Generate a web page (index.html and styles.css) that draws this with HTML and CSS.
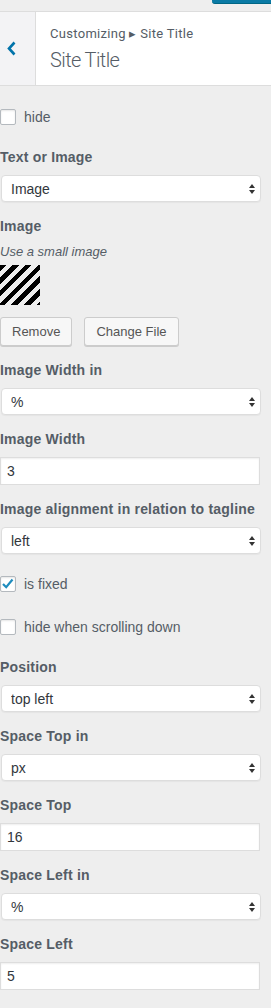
FILE: index.html
```html
<!DOCTYPE html>
<html lang="en">
    <head>
        <meta charset="UTF-8" />
        <meta name="viewport" content="width=device-width, initial-scale=1.0" />
        <title>Site Title</title>
        <link rel="stylesheet" href="styles.css">
    </head>
    <body>
        <!-- top bar with publish button -->
        <div class="top-bar">
            <span class="publish"></span>
        </div>

        <!-- section header -->
        <div class="section-head">
            <button class="back" aria-label="Back">
                <svg width="9" height="15" viewBox="0 0 9 15"><path d="M7.5 1.5 L2 7.5 L7.5 13.5" fill="none" stroke="#0073aa" stroke-width="2.6"/></svg>
            </button>
            <div class="head-title">
                <span class="crumb">Customizing ▸ Site Title</span>
                <h3>Site Title</h3>
            </div>
        </div>

        <div class="controls">
            <label class="control check-row"><input type="checkbox" /> hide</label>

            <div class="control">
                <span class="control-title">Text or Image</span>
                <select><option>Image</option><option>Text</option></select>
            </div>

            <div class="control">
                <span class="control-title">Image</span>
                <span class="description">Use a small image</span>
                <div class="thumb"></div>
                <div class="actions">
                    <button class="button">Remove</button>
                    <button class="button">Change File</button>
                </div>
            </div>

            <div class="control">
                <span class="control-title">Image Width in</span>
                <select><option>%</option><option>px</option></select>
            </div>

            <div class="control">
                <span class="control-title">Image Width</span>
                <input type="text" value="3" />
            </div>

            <div class="control">
                <span class="control-title">Image alignment in relation to tagline</span>
                <select><option>left</option><option>right</option></select>
            </div>

            <label class="control check-row"><input type="checkbox" checked /> is fixed</label>
            <label class="control check-row"><input type="checkbox" /> hide when scrolling down</label>

            <div class="control">
                <span class="control-title">Position</span>
                <select><option>top left</option><option>top right</option></select>
            </div>

            <div class="control">
                <span class="control-title">Space Top in</span>
                <select><option>px</option><option>%</option></select>
            </div>

            <div class="control">
                <span class="control-title">Space Top</span>
                <input type="text" value="16" />
            </div>

            <div class="control">
                <span class="control-title">Space Left in</span>
                <select><option>%</option><option>px</option></select>
            </div>

            <div class="control">
                <span class="control-title">Space Left</span>
                <input type="text" value="5" />
            </div>

            <div class="control">
                <span class="control-title faded">Overlay Width</span>
            </div>
        </div>
    </body>
</html>
```

FILE: styles.css
```css
body {
    margin: 0;
    background-color: #eee;
    font-family: "Liberation Sans", Arial, sans-serif;
    font-size: 14px;
    color: #555d66;
}

/* top bar */
.top-bar {
    height: 11px;
    border-bottom: 1px solid #ddd;
    display: flex;
    justify-content: flex-end;
}

.publish {
    display: block;
    width: 59px;
    height: 3px;
    background-color: #0a7aa5;
    border-bottom: 1px solid #006685;
    border-radius: 0 0 0 3px;
}

/* section header */
.section-head {
    display: flex;
    height: 73px;
    border-bottom: 1px solid #ddd;
    background-color: #fff;
}

.back {
    width: 36px;
    padding: 0 0 0 7px;
    border: none;
    border-right: 1px solid #ddd;
    background-color: #f3f3f5;
    display: flex;
    align-items: center;
}

.head-title {
    padding: 12px 0 0 14px;
}

.crumb {
    display: block;
    font-family: Roboto, "Liberation Sans", sans-serif;
    font-size: 13px;
    letter-spacing: 0.3px;
    line-height: 20px;
    color: #555d66;
}

.head-title h3 {
    margin: 3px 0 0;
    font-family: Roboto, "Liberation Sans", sans-serif;
    font-size: 20px;
    font-weight: 300;
    letter-spacing: -0.6px;
    line-height: 26px;
    color: #555d66;
}

/* controls */
.controls {
    padding-top: 15px;
    width: 260px;
}

.control {
    display: block;
    margin-bottom: 14px;
}

.control-title {
    display: block;
    font-weight: bold;
    letter-spacing: 0.2px;
    line-height: 20px;
    margin-bottom: 8px;
}

.control-title.faded {
    color: #b9bdc1;
}

.description {
    display: block;
    font-size: 13px;
    font-style: italic;
    line-height: 16px;
}

select {
    display: block;
    width: 260px;
    height: 27px;
    margin-left: 1px;
    padding: 0 0 0 9px;
    font-family: "Liberation Sans", Arial, sans-serif;
    font-size: 14px;
    color: #32373c;
    background-color: #fff;
    background-image: url("data:image/svg+xml,%3Csvg xmlns='http://www.w3.org/2000/svg' width='6' height='10'%3E%3Cpath d='M0 4 L3 0 L6 4 Z M0 6 L3 10 L6 6 Z' fill='%23333'/%3E%3C/svg%3E");
    background-repeat: no-repeat;
    background-position: right 5px center;
    border: 1px solid #ddd;
    border-radius: 4px;
    box-shadow: 0 1px 1px rgba(0, 0, 0, 0.04);
    appearance: none;
    -webkit-appearance: none;
}

input[type="text"] {
    display: block;
    box-sizing: border-box;
    width: 260px;
    height: 28px;
    margin: 0;
    padding: 0 6px;
    font-family: "Liberation Sans", Arial, sans-serif;
    font-size: 14px;
    color: #32373c;
    background-color: #fff;
    border: 1px solid #ddd;
    box-shadow: inset 0 1px 2px rgba(0, 0, 0, 0.07);
}

/* checkbox rows */
.check-row {
    display: flex;
    align-items: center;
    gap: 8px;
    padding: 8px 0;
    line-height: 16px;
}

.check-row + .check-row {
    margin-top: -3px;
}

.check-row input {
    width: 16px;
    height: 16px;
    margin: 0;
    border: 1px solid #b4b9be;
    border-radius: 2px;
    background-color: #fff;
    box-shadow: inset 0 1px 2px rgba(0, 0, 0, 0.1);
    appearance: none;
    -webkit-appearance: none;
}

.check-row input:checked {
    background-image: url("data:image/svg+xml,%3Csvg xmlns='http://www.w3.org/2000/svg' width='16' height='16'%3E%3Cpath d='M3 8 L6.2 11.2 L12.5 3.5' fill='none' stroke='%231e8cbe' stroke-width='2.2'/%3E%3C/svg%3E");
    background-repeat: no-repeat;
    background-position: center;
}

/* image */
.thumb {
    width: 40px;
    height: 40px;
    margin-top: 5px;
    background-image: repeating-linear-gradient(135deg, #000 0 4.5px, transparent 4.5px 9px);
}

.actions {
    display: flex;
    gap: 12px;
    margin-top: 12px;
}

.button {
    height: 29px;
    padding: 0 11px;
    font-family: "Liberation Sans", Arial, sans-serif;
    font-size: 13px;
    color: #555;
    background-color: #f7f7f7;
    border: 1px solid #ccc;
    border-radius: 3px;
    box-shadow: 0 1px 0 #ccc;
}
```
